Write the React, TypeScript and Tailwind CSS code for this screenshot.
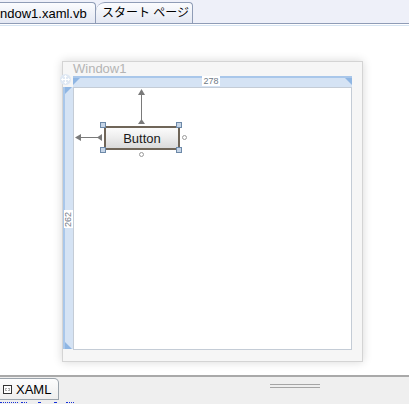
import React from 'react';

const ui = { fontFamily: '"Liberation Sans", Arial, sans-serif' };
const cjk = { fontFamily: '"Liberation Sans", "Noto Sans CJK JP", sans-serif' };

function Handle({ className }: { className: string }) {
  return <div className={`absolute w-[6px] h-[6px] bg-[#c5d4e6] border border-[#6d89a8] ${className}`} />;
}

function Dot({ className }: { className: string }) {
  return <div className={`absolute w-[5px] h-[5px] rounded-full bg-white border border-[#9a9a9a] ${className}`} />;
}

export default function App() {
  return (
    <div className="w-[409px] h-[404px] overflow-hidden bg-white flex flex-col" style={ui}>
      {/* document tabs */}
      <div className="h-[24px] shrink-0 bg-[#eef0f9] border-b border-[#8f9cb6] flex items-end overflow-hidden">
        <div className="h-[21px] w-[96px] shrink-0 border border-b-0 border-l-0 border-[#8f9cb6] rounded-tr-[4px] bg-gradient-to-b from-[#fbfcfe] to-[#e4e8f3] flex items-center">
          <span className="text-[13px] text-black whitespace-nowrap leading-none">ndow1.xaml.vb</span>
        </div>
        <div className="h-[21px] w-[97px] shrink-0 border border-b-0 border-l-0 border-[#8f9cb6] rounded-tl-[9px] rounded-tr-[4px] bg-gradient-to-b from-[#fbfcfe] to-[#e4e8f3] flex items-center pl-[6px]">
          <span className="text-[12px] text-black whitespace-nowrap leading-none" style={cjk}>スタート ページ</span>
        </div>
      </div>
      <div className="h-[2px] shrink-0 bg-white border-b border-[#d6e4f2]" />

      {/* design surface */}
      <div className="flex-1 bg-white pl-[62px] pt-[35px]">
        <div className="relative w-[301px] h-[301px] bg-[#f6f6f6] border border-[#d4d4d4] shadow-[0_0_9px_rgba(0,0,0,0.16)] flex flex-col">
          <div className="h-[14px] pl-[10px] text-[13px] leading-[14px] text-[#b4b4b4]">Window1</div>

          {/* move glyph */}
          <div className="absolute left-[-3px] top-[12px] w-[11px] h-[11px] rounded-full bg-[#dfe8f3] flex items-center justify-center">
            <svg width="9" height="9" viewBox="0 0 9 9">
              <path d="M4.5 0.5 V8.5 M0.5 4.5 H8.5" stroke="#ffffff" strokeWidth="1" />
              <path d="M4.5 0.5 L3 2 M4.5 0.5 L6 2 M4.5 8.5 L3 7 M4.5 8.5 L6 7 M0.5 4.5 L2 3 M0.5 4.5 L2 6 M8.5 4.5 L7 3 M8.5 4.5 L7 6" stroke="#ffffff" strokeWidth="0.8" fill="none" />
            </svg>
          </div>

          {/* top ruler */}
          <div className="flex h-[11px]">
            <div className="w-[10px] shrink-0" />
            <div className="relative w-[279px] h-[11px] bg-[#d5e3f4] border-t-2 border-[#a9c7ea]">
              <svg className="absolute left-0 top-0" width="7" height="7" viewBox="0 0 7 7">
                <path d="M0 0 H7 L0 7 Z" fill="#8fb6e3" />
              </svg>
              <svg className="absolute right-0 top-0" width="7" height="7" viewBox="0 0 7 7">
                <path d="M0 0 H7 V7 Z" fill="#8fb6e3" />
              </svg>
              <div className="absolute left-[129px] top-[-2px] w-[18px] h-[10px] bg-white flex items-center justify-center text-[9px] leading-none text-[#6f7a86]">
                278
              </div>
            </div>
          </div>

          <div className="flex">
            {/* left ruler */}
            <div className="relative w-[10px] h-[262px] bg-[#d5e3f4] border-l-2 border-[#a9c7ea] shrink-0">
              <svg className="absolute left-0 top-0" width="7" height="7" viewBox="0 0 7 7">
                <path d="M0 0 H7 L0 7 Z" fill="#8fb6e3" />
              </svg>
              <svg className="absolute left-0 bottom-0" width="7" height="7" viewBox="0 0 7 7">
                <path d="M0 0 L7 7 H0 Z" fill="#8fb6e3" />
              </svg>
              <div className="absolute left-[-1px] top-[123px] w-[9px] h-[18px] bg-white flex items-center justify-center">
                <span className="block -rotate-90 text-[9px] leading-none text-[#6f7a86]">262</span>
              </div>
            </div>

            {/* window content */}
            <div className="relative w-[279px] h-[263px] bg-white border border-[#c4ccd6]">
              {/* up anchor arrow */}
              <div className="absolute left-[67px] top-[6px] w-px h-[28px] bg-[#7a7a7a]" />
              <svg className="absolute left-[64px] top-[1px]" width="7" height="6" viewBox="0 0 7 6">
                <path d="M3.5 0 L7 6 H0 Z" fill="#7a7a7a" />
              </svg>
              <svg className="absolute left-[64px] top-[31px]" width="7" height="5" viewBox="0 0 7 5">
                <path d="M3.5 0 L7 5 H0 Z" fill="#7a7a7a" />
              </svg>

              {/* left anchor arrow */}
              <div className="absolute left-[6px] top-[49px] w-[20px] h-px bg-[#7a7a7a]" />
              <svg className="absolute left-[1px] top-[46px]" width="6" height="7" viewBox="0 0 6 7">
                <path d="M0 3.5 L6 0 V7 Z" fill="#7a7a7a" />
              </svg>
              <svg className="absolute left-[23px] top-[46px]" width="5" height="7" viewBox="0 0 5 7">
                <path d="M0 3.5 L5 0 V7 Z" fill="#7a7a7a" />
              </svg>

              {/* button */}
              <div className="absolute left-[30px] top-[38px] w-[76px] h-[24px] rounded-[2px] border-2 border-[#6f6558] bg-gradient-to-b from-[#fbfbfb] via-[#ececec] to-[#dadada] flex items-center justify-center">
                <span className="text-[13px] leading-none text-[#1a1a1a]">Button</span>
              </div>
              <Handle className="left-[26px] top-[34px]" />
              <Handle className="left-[102px] top-[34px]" />
              <Handle className="left-[26px] top-[59px]" />
              <Handle className="left-[102px] top-[59px]" />
              <Dot className="left-[108px] top-[47px]" />
              <Dot className="left-[65px] top-[64px]" />
            </div>
          </div>
        </div>
      </div>

      {/* bottom pane tabs */}
      <div className="h-[29px] shrink-0 border-t-2 border-[#a9a9a9] bg-[#efefef] relative">
        <div className="absolute left-0 top-[1px] w-[59px] h-[22px] border border-l-0 border-[#9aa3ab] rounded-tr-[5px] bg-gradient-to-b from-[#fdfdfd] to-[#eeeeee] flex items-center pl-[3px] gap-[4px]">
          <div className="w-[9px] h-[9px] border border-[#333] bg-white flex items-center justify-center">
            <svg width="5" height="3" viewBox="0 0 5 3">
              <path d="M1.5 0 L0 1.5 L1.5 3 M3.5 0 L5 1.5 L3.5 3" stroke="#333" strokeWidth="0.8" fill="none" />
            </svg>
          </div>
          <span className="text-[13px] leading-none text-black">XAML</span>
        </div>
        <div className="absolute left-[270px] top-[7px] w-[50px] h-[4px] border-y border-[#a5a5a5]" />
        <div className="absolute left-0 top-[25px] flex gap-[3px]">
          <div className="w-[18px] h-[2px] border-t border-dotted border-[#1530d8]" />
          <div className="w-[6px] h-[2px] border-t border-dotted border-[#1530d8]" />
          <div className="w-[3px] h-[2px] border-t border-[#1530d8] ml-[8px]" />
          <div className="w-[3px] h-[2px] border-t border-[#1530d8] ml-[10px]" />
          <div className="w-[8px] h-[2px] border-t border-dotted border-[#1530d8] ml-[6px]" />
        </div>
      </div>
    </div>
  );
}
